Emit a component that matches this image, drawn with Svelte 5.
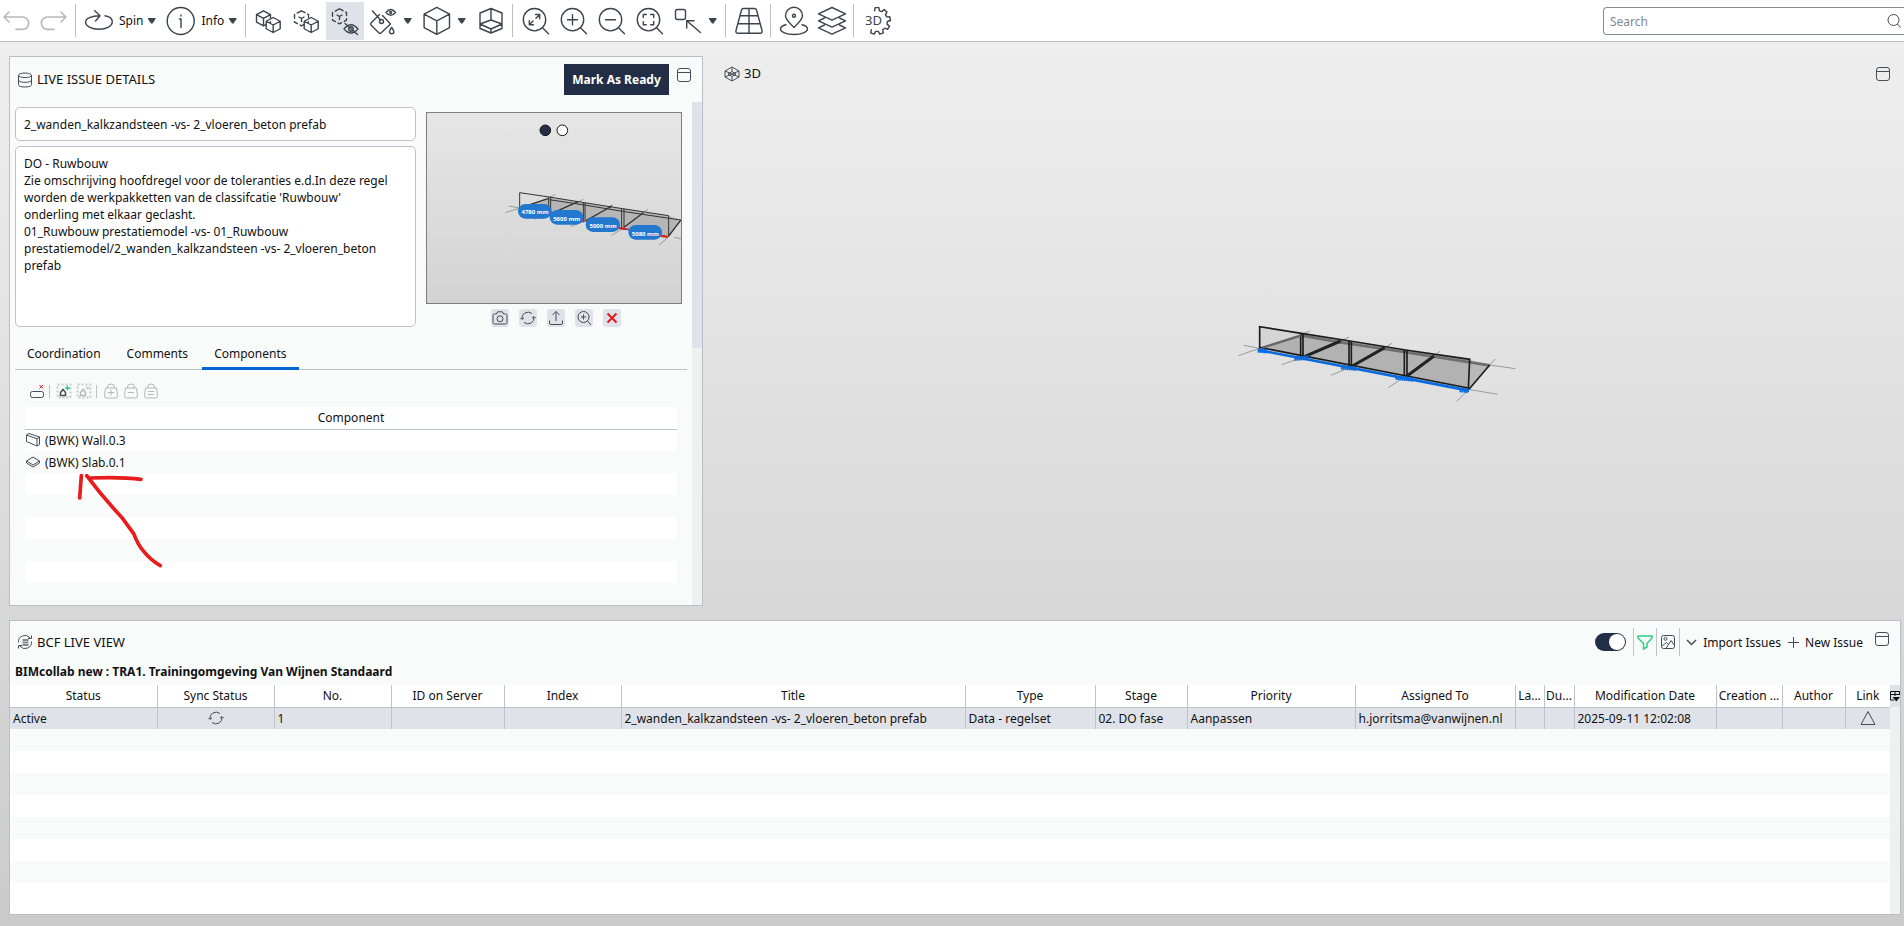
<script lang="ts">
  let activeTab = $state("Components");
  let liveSync = $state(true);
  let title = $state("2_wanden_kalkzandsteen -vs- 2_vloeren_beton prefab");
  let description = $state(
    "DO - Ruwbouw\nZie omschrijving hoofdregel voor de toleranties e.d.In deze regel worden de werkpakketten van de classifcatie 'Ruwbouw' onderling met elkaar geclasht.\n01_Ruwbouw prestatiemodel -vs- 01_Ruwbouw prestatiemodel/2_wanden_kalkzandsteen -vs- 2_vloeren_beton prefab"
  );

  const tabs = ["Coordination", "Comments", "Components"];

  const components = [
    { icon: "wall", name: "(BWK) Wall.0.3" },
    { icon: "slab", name: "(BWK) Slab.0.1" },
  ];

  const columns = [
    { label: "Status", width: 147, value: "Active" },
    { label: "Sync Status", width: 117, icon: "sync" },
    { label: "No.", width: 117, value: "1" },
    { label: "ID on Server", width: 113 },
    { label: "Index", width: 117 },
    { label: "Title", width: 344, value: "2_wanden_kalkzandsteen -vs- 2_vloeren_beton prefab" },
    { label: "Type", width: 130, value: "Data - regelset" },
    { label: "Stage", width: 92, value: "02. DO fase" },
    { label: "Priority", width: 168, value: "Aanpassen" },
    { label: "Assigned To", width: 160, value: "h.jorritsma@vanwijnen.nl" },
    { label: "La...", width: 29 },
    { label: "Du...", width: 30 },
    { label: "Modification Date", width: 142, value: "2025-09-11 12:02:08" },
    { label: "Creation ...", width: 66 },
    { label: "Author", width: 63 },
    { label: "Link", width: 45, icon: "link" },
  ];
  const totalWidth = columns.reduce((sum, c) => sum + c.width, 0);

  // isometric cube around a center point
  function cube(x: number, y: number, w: number, h: number) {
    const q = h / 2;
    return `M${x} ${y - h}L${x + w} ${y - q}V${y + q}L${x} ${y + h}L${x - w} ${y + q}V${y - q}Z`;
  }

  function cubeEdges(x: number, y: number, w: number, h: number) {
    const q = h / 2;
    return `M${x - w} ${y - q}L${x} ${y}L${x + w} ${y - q}M${x} ${y}V${y + h}`;
  }

  // the open gear behind the 3D label
  function gear() {
    const points: string[] = [];
    for (let i = 0; i < 6; i++) {
      const mid = -90 + i * 40;
      for (const [offset, r] of [[-13, 10.5], [-8, 13.5], [8, 13.5], [13, 10.5]]) {
        const a = ((mid + offset) * Math.PI) / 180;
        points.push(`${(19 + r * Math.cos(a)).toFixed(1)} ${(19 + r * Math.sin(a)).toFixed(1)}`);
      }
    }
    return "M" + points.join("L");
  }
</script>

{#snippet tool(name: string, label: string, selected = false)}
  <button class="tool" class:selected aria-label={label}>
    <svg viewBox="0 0 38 38">
      {#if name === "undo"}
        <path class="muted" d="M12 10l-5 5 5 5M7 15H25.500a6.200 6.200 0 0 1 0 12.400H19" />
      {:else if name === "redo"}
        <path class="muted" d="M26 10l5 5-5 5M31 15H12.500a6.200 6.200 0 0 0 0 12.400H19" />
      {:else if name === "spin"}
        <path d="M25 13.800C29.500 14.500 32.300 16.800 32.300 19.800 32.300 24 26.500 27.300 19 27.300S5.600 24 5.600 20.300 11 13.900 20 13.700M14.700 8.700L20 13.700 15.500 19" />
      {:else if name === "info"}
        <circle cx="18.700" cy="19" r="13.500" />
        <path d="M17.500 17H19V25.500M19 13v1" />
      {:else if name === "cubes"}
        <path d={cube(13.5, 16.3, 7, 7.5) + cubeEdges(13.5, 16.3, 7, 7.5)} />
        <path class="cover" d={cube(23.2, 23, 7, 7.5) + cubeEdges(23.2, 23, 7, 7.5)} />
      {:else if name === "isolate"}
        <path stroke-dasharray="4 3" d={cube(13.5, 16.3, 7, 7.5)} />
        <path d="M11 15l2.500 1.500L16 15M13.500 16.500v3" />
        <path class="cover" d={cube(23.2, 23, 7, 7.5) + cubeEdges(23.2, 23, 7, 7.5)} />
      {:else if name === "hide"}
        <path stroke-dasharray="4 3" d={cube(13.5, 14.3, 7, 7.5)} />
        <path d="M11 13l2.500 1.500L16 13M13.500 14.500v3M18 27q7-8.500 14 0q-7 8-14 0M19 21.500l12.500 11" />
        <circle cx="25" cy="27" r="2.200" />
      {:else if name === "paint"}
        <path d="M15.500 12.500L7 21q-1 1 0 2l8 8q1 1 2 0l9.500-9-8-8.500M8.500 9l8 9" />
        <circle cx="17.500" cy="19.500" r="2" />
        <path d="M22 10.500q4.800-6 9.500 0q-4.700 5.500-9.500 0M27.700 25.500q-2.500 3.500-2.200 4.500a2.300 2.300 0 0 0 4.500 0q0-1-2.300-4.500" />
        <circle cx="26.700" cy="10.400" r="1" />
      {:else if name === "cube"}
        <path d={cube(18.8, 18.8, 12.7, 13.5) + cubeEdges(18.8, 18.8, 12.7, 13.5)} />
      {:else if name === "section"}
        <path d="M19 6.500L30 11V26.500L19 31 8 26.500V11ZM19 6.500V18M8 22L19 18 30 22 19 27ZM19 27v4" />
      {:else if name.startsWith("zoom")}
        <circle cx="17.500" cy="17.700" r="11.200" />
        <path d="M25.500 25.700l6 6" />
        {#if name === "zoom-extents"}
          <path d="M12.500 22.500L16 19M19 16.300L22.500 12.800M18.500 12.500H22.700V16.700M12.300 18.700V22.700H16.500" />
        {:else if name === "zoom-in"}
          <path d="M12.500 17.700h10M17.500 12.700v10" />
        {:else if name === "zoom-out"}
          <path d="M12.500 17.700h10" />
        {:else}
          <path d="M12.300 15.500v-3h3M19.700 12.500h3v3M22.700 19.700v3h-3M15.300 22.700h-3v-3" />
        {/if}
      {:else if name === "select"}
        <rect x="6.500" y="7.500" width="10" height="10" rx="2" />
        <path d="M17.700 26V18.700H25M17.700 18.700L31.500 30.500" />
      {:else if name === "grid"}
        <path d="M13.500 6.500H24.500Q26 6.500 26.500 8L32 28.500Q32.500 31.300 30 31.300H8Q5.500 31.300 6 28.500L11.500 8Q12 6.500 13.500 6.500ZM19 6.500V31.300M10.500 13.700H27.500M8 21.700H30" />
      {:else if name === "pin"}
        <path d="M19 25.500C14 20 10.500 17.500 10.500 13.700a8.500 8.500 0 0 1 17 0C27.500 17.500 24 20 19 25.500ZM11 22.700C7.500 23.500 5.500 25.200 5.500 27 5.500 30 11.500 32.500 19 32.500S32.500 30 32.500 27C32.500 25.200 30.500 23.500 27 22.700" />
        <circle cx="19" cy="13.800" r="1.500" />
      {:else if name === "layers"}
        <path d="M19 5.500L32.500 11.800 19 18.200 5.500 11.800ZM11.500 16L5.500 18.800 19 25.200 32.500 18.800 26.500 16M11.500 23L5.500 25.800 19 32.200 32.500 25.800 26.500 23" />
      {:else}
        <path d={gear()} />
        <text x="7" y="23">3D</text>
      {/if}
    </svg>
  </button>
{/snippet}

{#snippet more(label: string)}
  <button class="more" aria-label={label}>
    <svg viewBox="0 0 8 6"><path d="M0 0H7.500V1L4.500 5.500H3L0 1Z" /></svg>
  </button>
{/snippet}

{#snippet icon(name: string)}
  <svg class="icon" viewBox="0 0 16 16">
    {#if name === "database"}
      <ellipse cx="8" cy="3.300" rx="6.500" ry="2.300" />
      <path d="M1.500 3.300v9.200q0 2.500 6.500 2.500t6.500-2.500V3.300M1.500 8q0 2.300 6.500 2.300t6.500-2.300" />
    {:else if name === "window"}
      <rect x="1.500" y="1.500" width="13" height="13" rx="2.500" />
      <path d="M1.500 5.500h13" />
    {:else if name === "live"}
      <path d="M1.500 8.500A6.500 6.500 0 0 1 13 3.800M14.500 7.500A6.500 6.500 0 0 1 3 12.200M14.500 1.500V4.500H11M1.500 14.500V11.500H5" />
      <path class="list" d="M5.500 6h6M5.500 8.500h6M5.500 11h6" />
    {:else if name === "view"}
      <path d="M8 1L15 5V11L8 15 1 11V5ZM1 5L15 11M15 5L1 11M8 1V5.500M8 10.500V15M8 5.500L12 8 8 10.500 4 8Z" />
    {:else if name === "camera"}
      <path d="M2.500 4H4.500L5.500 1.800H10.500L11.500 4H13.500Q15 4 15 5.500V12.500Q15 14 13.500 14H2.500Q1 14 1 12.500V5.500Q1 4 2.500 4Z" />
      <circle cx="8" cy="8.800" r="3" />
    {:else if name === "sync"}
      <path d="M2 9A6 6 0 0 1 4.500 3.200Q8.500.8 12 3.500M14 7A6 6 0 0 1 11.500 12.800Q7.500 15.200 4 12.500M.3 7.800L2 9.500 4 7.800M12 8.200L14 6.500 15.700 8.200" />
    {:else if name === "upload"}
      <path d="M1.500 10.500V13Q1.500 14.500 3 14.500H13Q14.500 14.500 14.500 13V10.500M8 11V1.500M4.500 5L8 1.500 11.500 5" />
    {:else if name === "magnify"}
      <circle cx="7.500" cy="7" r="5.500" />
      <path d="M11.500 11l3.500 4M5 7h5M7.500 4.500v5" />
    {:else if name === "delete"}
      <path class="red" d="M3.500 3.500L12.500 12.500M12.500 3.500L3.500 12.500" />
    {:else if name === "clear"}
      <rect x="1.500" y="8.500" width="13" height="6" rx="2" />
      <path class="red thin" d="M10.500 2L14 5.500M14 2L10.500 5.500" />
    {:else if name === "add-selected" || name === "remove-selected"}
      <g class:muted={name === "remove-selected"}>
        <rect class="dots" x="1.500" y="1.500" width="13" height="13" />
        <path class="bold" d="M4.500 12.500V9.500L7 6.500L9.500 9.500V12.500Z" />
        {#if name === "add-selected"}
          <path class="green" d="M11.500 2.500v5M9 5h5" />
        {:else}
          <path d="M10 3.500l3 3M13 3.500l-3 3" />
        {/if}
      </g>
    {:else if name.startsWith("basket")}
      <g class="muted">
        <path d="M2.500 5H13.500L14.500 13Q14.500 15 12.500 15H3.500Q1.500 15 1.500 13ZM4.500 5V4Q4.500 1 8 1T11.500 4V5" />
        {#if name === "basket-add"}
          <path d="M5 9.500h6M8 6.500v6" />
        {:else if name === "basket-remove"}
          <path d="M5 9.500h6" />
        {:else}
          <path d="M5 8.500h6M5 11.500h6" />
        {/if}
      </g>
    {:else if name === "wall"}
      <path d="M1.500 3L4 1.500 14.500 5V12.500L12 14 1.500 9.500ZM1.500 3L12 6.800V14M12 6.800L14.500 5" />
    {:else if name === "slab"}
      <path d="M8 3L14.500 7V9L8 13 1.500 9V7ZM1.500 7L8 11 14.500 7" />
    {:else if name === "filter"}
      <path class="green" d="M1 2H15V4L10 9.500V13L6.500 15V9.500L1 4Z" />
    {:else if name === "image"}
      <rect x="1.500" y="1.500" width="13" height="13" rx="2" />
      <circle cx="5.500" cy="4.800" r="1.500" />
      <path d="M2 12l4.500-3.500L8 10M6 14.500L11 6.500 14.500 11.500" />
    {:else if name === "chevron"}
      <path class="bold" d="M4 6l4.500 4.500L13 6" />
    {:else if name === "plus"}
      <path d="M8.500 3v11M3 8.500h11" />
    {:else if name === "link"}
      <path d="M8 1.500L15 14.500H1Z" />
    {:else if name === "search"}
      <circle cx="7.500" cy="7" r="5.500" />
      <path d="M11.500 11l3 3.500" />
    {/if}
  </svg>
{/snippet}

<div class="app">
  <header class="toolbar">
    {@render tool("undo", "Undo")}
    {@render tool("redo", "Redo")}
    <span class="divider"></span>
    {@render tool("spin", "Spin mode")}
    <span class="tool-label">Spin</span>
    {@render more("Spin options")}
    {@render tool("info", "Info mode")}
    <span class="tool-label">Info</span>
    {@render more("Info options")}
    <span class="divider"></span>
    {@render tool("cubes", "Show all")}
    {@render tool("isolate", "Isolate")}
    {@render tool("hide", "Hide others", true)}
    {@render tool("paint", "Colors")}
    {@render more("Color options")}
    {@render tool("cube", "Views")}
    {@render more("View options")}
    {@render tool("section", "Section")}
    <span class="divider"></span>
    {@render tool("zoom-extents", "Zoom extents")}
    {@render tool("zoom-in", "Zoom in")}
    {@render tool("zoom-out", "Zoom out")}
    {@render tool("zoom-window", "Zoom window")}
    {@render tool("select", "Select")}
    {@render more("Select options")}
    <span class="divider"></span>
    {@render tool("grid", "Grid")}
    <span class="divider"></span>
    {@render tool("pin", "Location")}
    {@render tool("layers", "Layers")}
    <span class="divider"></span>
    {@render tool("settings", "3D settings")}
    <div class="search">
      <input type="text" placeholder="Search" aria-label="Search" />
      {@render icon("search")}
    </div>
  </header>

  <main>
    <section class="panel details">
      <div class="panel-header">
        {@render icon("database")}
        <h2>LIVE ISSUE DETAILS</h2>
        <button class="ready">Mark As Ready</button>
        <button class="plain window" aria-label="Maximize details">{@render icon("window")}</button>
      </div>
      <div class="details-body">
        <div class="details-content">
          <div class="issue">
            <div class="fields">
              <input type="text" bind:value={title} aria-label="Title" />
              <textarea bind:value={description} aria-label="Description" spellcheck="false"></textarea>
            </div>
            <div class="preview">
              <svg class="snapshot" viewBox="51 189 762 570">
                <defs>
                  <linearGradient id="sky" x1="0" y1="0" x2="0" y2="1">
                    <stop offset="0" stop-color="#e6e6e6" />
                    <stop offset="1" stop-color="#d3d3d3" />
                  </linearGradient>
                </defs>
                <rect x="51" y="189" width="762" height="570" fill="url(#sky)" />
                <path class="floor" d="M330 474L418 441 523 458 638 476 776 497 812 510 776 560 638 535 523 514 418 492Z" />
                <path class="axis" d="M286 488L330 474M296 468l34 6M372 508l46-16M418 441l18-7M482 529l41-15M500 458l20-10M604 557l34-22M590 474l18-10M747 586l29-26M696 490l18-12M793 562l20 4" />
                <path class="edge" d="M329 474V428L418 441 523 458 638 476 776 497V558M416 441V490M422 441V490M520 458V512M525 458V512M635 476V533M642 476V533M418 449L523 465 638 484 812 510" />
                <path class="edge beam" d="M335 472L414 446M426 490L504 455M528 512L606 468M642 532L700 488M776 558L813 510" />
                <path class="red" d="M330 477L776 560" stroke-width="3" />
                <path class="cut" d="M330 479L523 516M560 524L755 556" />
                <path class="red" d="M627 534l20 4M752 558l22 3" stroke-width="6" />
                <rect class="tag" x="324" y="462" width="101" height="44" rx="22" />
                <rect class="tag" x="419" y="480" width="101" height="44" rx="22" />
                <rect class="tag" x="527" y="502" width="103" height="44" rx="22" />
                <rect class="tag" x="655" y="525" width="101" height="44" rx="22" />
                <text x="375" y="493">4780 mm</text>
                <text x="470" y="512">5600 mm</text>
                <text x="579" y="533">5000 mm</text>
                <text x="706" y="557">5080 mm</text>
                <circle cx="406" cy="241" r="16" fill="#222e45" stroke="#111" stroke-width="3" />
                <circle cx="457" cy="241" r="16" fill="#fff" stroke="#111" stroke-width="3" />
              </svg>
              <div class="preview-actions">
                <button aria-label="Take snapshot">{@render icon("camera")}</button>
                <button aria-label="Refresh snapshot">{@render icon("sync")}</button>
                <button aria-label="Upload snapshot">{@render icon("upload")}</button>
                <button aria-label="Enlarge snapshot">{@render icon("magnify")}</button>
                <button aria-label="Delete snapshot">{@render icon("delete")}</button>
              </div>
            </div>
          </div>

          <nav class="tabs">
            {#each tabs as tab}
              <button class:active={tab === activeTab} onclick={() => (activeTab = tab)}>{tab}</button>
            {/each}
          </nav>

          <div class="component-tools">
            <button class="plain" aria-label="Clear components">{@render icon("clear")}</button>
            <span></span>
            <button class="plain" aria-label="Add selected">{@render icon("add-selected")}</button>
            <button class="plain" aria-label="Remove selected">{@render icon("remove-selected")}</button>
            <span></span>
            <button class="plain" aria-label="Add to basket">{@render icon("basket-add")}</button>
            <button class="plain" aria-label="Remove from basket">{@render icon("basket-remove")}</button>
            <button class="plain" aria-label="Set basket">{@render icon("basket-set")}</button>
          </div>

          <div class="component-list">
            <table>
              <thead>
                <tr><th>Component</th></tr>
              </thead>
              <tbody>
                {#each components as component}
                  <tr>
                    <td><div class="component">{@render icon(component.icon)}{component.name}</div></td>
                  </tr>
                {/each}
                {#each Array(5) as _}
                  <tr><td></td></tr>
                {/each}
              </tbody>
            </table>
            <svg class="arrow" viewBox="0 0 300 290">
              <path d="M28 8L23 75M52 15Q150 11 207 19M44 8Q90 70 150 134L185 182Q200 220 215 235 235 260 265 278" />
            </svg>
          </div>
        </div>
        <div class="scrollbar"><div></div></div>
      </div>
    </section>

    <section class="viewer">
      <div class="viewer-header">
        {@render icon("view")}
        <h2>3D</h2>
        <button class="plain" aria-label="Maximize 3D view">{@render icon("window")}</button>
      </div>
      <svg class="model" viewBox="0 0 960 300">
        <path class="wall" d="M122 50L247 70V142L122 115Z" />
        <path class="floor" d="M122 115L245 73 393 94 560 120 752 150 812 165 748 240 558 200 393 172 248 143Z" />
        <path class="wall" d="M247 70L393 93V172L248 143ZM393 93L560 120V200L393 172ZM560 120L752 148 748 238 558 200Z" />
        <path class="axis" d="M74 106L122 115L58 137M188 164L248 143M245 73L274 63M336 196L393 172M365 93L390 81M508 233L558 200M497 113L519 100M712 275L748 240M645 138L664 123M812 165L829 147M812 165L889 176M748 238L836 253" />
        <path class="back" d="M245 76L365 97 497 117 645 140 812 166" />
        <path class="edge" d="M122 115V50L247 70 393 93 560 120 752 148 748 238M245 70V140M252 70V140M390 93V170M397 93V170M556 120V200M564 120V198M122 112L748 234" />
        <path class="soft" d="M130 113L245 77" />
        <path class="beam" d="M258 139L365 93M400 168L497 113M564 198L645 138" />
        <path class="edge" d="M750 238L812 165" />
        <path class="cut" d="M118 120L750 242" />
        <path class="nodes" d="M116 121l28 3M226 146l44-3M366 172l46 4M530 203l54 6M722 240l26 3" />
      </svg>
    </section>

    <section class="panel live">
      <div class="live-header">
        {@render icon("live")}
        <h2>BCF LIVE VIEW</h2>
        <input class="toggle" type="checkbox" bind:checked={liveSync} aria-label="Live sync" />
        <span class="rule"></span>
        <button class="plain" aria-label="Filter">{@render icon("filter")}</button>
        <span class="rule"></span>
        <button class="plain" aria-label="Snapshots">{@render icon("image")}</button>
        <span class="rule"></span>
        <button class="plain action">{@render icon("chevron")}Import Issues</button>
        <button class="plain action">{@render icon("plus")}New Issue</button>
        <button class="plain window" aria-label="Maximize live view">{@render icon("window")}</button>
      </div>
      <h3>BIMcollab new : TRA1. Trainingomgeving Van Wijnen Standaard</h3>
      <div class="grid-body">
        <div class="grid-rows">
          <table class="issues">
            <colgroup>
              {#each columns as column}
                <col style="width: {(column.width / totalWidth) * 100}%" />
              {/each}
            </colgroup>
            <thead>
              <tr>
                {#each columns as column}
                  <th>{column.label}</th>
                {/each}
              </tr>
            </thead>
            <tbody>
              <tr class="current">
                {#each columns as column}
                  <td class:centered={column.icon}>
                    {#if column.icon}{@render icon(column.icon)}{:else}{column.value ?? ""}{/if}
                  </td>
                {/each}
              </tr>
              {#each Array(7) as _}
                <tr><td colspan={columns.length}></td></tr>
              {/each}
            </tbody>
          </table>
        </div>
        <div class="gutter">
          <button class="plain" aria-label="Choose columns">
            <svg viewBox="0 0 10 12">
              <path d="M.5 10V1.500H9.500V5M.5 4.500H9.500M5 1.500V6M.5 10H4" fill="none" stroke="#111" />
              <path d="M2.500 7H10L6.300 11.500Z" fill="#111" />
            </svg>
          </button>
        </div>
      </div>
    </section>
  </main>
</div>

<style>
  :global(body) {
    background: #cbcbcb;
  }

  .app {
    background: linear-gradient(#f0f0f0, #cbcbcb);
    color: #111;
    display: flex;
    flex-direction: column;
    font: 12px/17px "Noto Sans", sans-serif;
    min-height: 100vh;
    overflow: hidden;
  }

  button,
  input,
  textarea {
    box-sizing: border-box;
    color: inherit;
    font: inherit;
    margin: 0;
  }

  button {
    border: 0;
    padding: 0;
  }

  svg {
    display: block;
    fill: none;
  }

  h2,
  h3 {
    margin: 0;
  }

  h2 {
    font-size: 13px;
    font-weight: 400;
  }

  .icon {
    flex: none;
    height: 16px;
    stroke: #454d57;
    width: 16px;
  }

  .icon .muted {
    stroke: #b5b7b9;
  }

  .icon .bold {
    stroke-width: 1.5;
  }

  .icon .red {
    stroke: #e01b1b;
    stroke-width: 2;
  }

  .icon .thin {
    stroke-width: 1;
  }

  .icon .green {
    stroke: #2fce84;
    stroke-width: 1.5;
  }

  .icon .list {
    stroke: #888;
    stroke-width: 2;
  }

  .icon .dots {
    stroke: #c8cacc;
    stroke-dasharray: 2 2;
    stroke-width: 2;
  }

  .plain {
    background: none;
  }

  /* toolbar */

  .toolbar {
    align-items: center;
    background: #fff;
    border-bottom: 1px solid #b9bdc6;
    display: flex;
    height: 41px;
  }

  .tool:first-child {
    margin-left: -3px;
  }

  .tool {
    background: none;
    flex: none;
    height: 38px;
    width: 38px;
  }

  .tool.selected {
    background: #dfe2e8;
  }

  .tool path,
  .tool circle,
  .tool rect {
    stroke: #3c444d;
    stroke-linecap: round;
    stroke-linejoin: round;
    stroke-width: 1.4;
  }

  .tool .muted {
    stroke: #b8b8b8;
    stroke-width: 1.6;
  }

  .tool .cover {
    fill: #fff;
  }

  .tool text {
    fill: #3c444d;
    font-size: 13px;
  }

  .tool-label {
    padding: 0 3px 0 1px;
  }

  .more {
    background: none;
    height: 38px;
    padding-left: 2px;
    width: 16px;
  }

  .more svg {
    fill: #3c444d;
    height: 6px;
    width: 8px;
  }

  .divider {
    background: #b9bdc6;
    height: 33px;
    margin: 0 4px 0 2px;
    width: 1px;
  }

  .search {
    align-items: center;
    border: 1px solid #868b93;
    border-radius: 4px 0 0 4px;
    border-right: 0;
    display: flex;
    height: 26px;
    margin-left: auto;
    padding-right: 2px;
    width: 298px;
  }

  .search input {
    background: none;
    border: 0;
    flex: 1;
    outline: 0;
    padding: 2px 6px 0;
  }

  .search input::placeholder {
    color: #7f8890;
  }

  /* workspace */

  main {
    display: grid;
    flex: 1;
    gap: 14px 0;
    grid-template-columns: 694fr 1198fr;
    grid-template-rows: 550fr 295fr;
    padding: 14px 3px 11px 9px;
  }

  .panel {
    background: #f9fbfa;
    border: 1px solid #b9bfc9;
    display: flex;
    flex-direction: column;
    min-width: 0;
  }

  .panel-header {
    align-items: center;
    display: flex;
    height: 45px;
    padding: 0 10px 0 7px;
  }

  .panel-header h2,
  .live-header h2 {
    flex: 1;
    padding-left: 4px;
  }

  .ready {
    background: #222e45;
    color: #fff;
    font-weight: 700;
    height: 31px;
    width: 105px;
  }

  .window {
    align-self: flex-start;
    margin: 10px 0 0 7px;
  }

  .details-body {
    display: flex;
    flex: 1;
  }

  .details-content {
    flex: 1;
    min-width: 0;
    padding: 5px 5px 0;
  }

  .scrollbar {
    background: #eff1f1;
    width: 10px;
  }

  .scrollbar div {
    background: #dfe2e8;
    height: 49%;
  }

  .issue {
    display: grid;
    gap: 10px;
    grid-template-columns: 1fr 256px;
    padding-right: 5px;
  }

  .fields {
    display: flex;
    flex-direction: column;
    gap: 5px;
  }

  .fields input,
  .fields textarea {
    background: #fff;
    border: 1px solid #bcc1cb;
    border-radius: 5px;
    padding: 0 8px;
    width: 100%;
  }

  .fields input {
    height: 34px;
  }

  .fields textarea {
    height: 181px;
    padding: 8px 20px 8px 8px;
    resize: none;
  }

  .preview {
    padding-top: 5px;
  }

  .snapshot {
    border: 1px solid #7d7d7d;
  }

  .snapshot .floor,
  .model .floor {
    fill: rgba(125, 125, 125, 0.4);
  }

  .snapshot .edge {
    stroke: #333;
    stroke-width: 3;
  }

  .snapshot .beam {
    stroke-width: 4;
  }

  .snapshot .axis,
  .model .axis {
    stroke: #777;
    stroke-width: 2;
  }

  .snapshot .red {
    stroke: #e81c1c;
  }

  .snapshot .cut {
    stroke: #1b4fa8;
    stroke-width: 3;
  }

  .snapshot .tag {
    fill: #2277cf;
  }

  .snapshot text {
    fill: #fff;
    font-size: 18px;
    font-weight: 700;
    text-anchor: middle;
  }

  .preview-actions {
    display: flex;
    gap: 10px;
    justify-content: center;
    padding: 5px 0 0 4px;
  }

  .preview-actions button {
    background: #dfe2e8;
    border-radius: 3px;
    height: 18px;
    padding: 1px;
    width: 18px;
  }

  .tabs {
    border-bottom: 1px solid #bcc1cb;
    display: flex;
    gap: 2px;
    margin-top: 9px;
  }

  .tabs button {
    background: none;
    border-bottom: 3px solid transparent;
    height: 34px;
    margin-bottom: -1px;
    padding: 4px 12px 0;
  }

  .tabs .active {
    border-color: #0064d2;
  }

  .component-tools {
    align-items: center;
    display: flex;
    gap: 4px;
    padding: 13px 14px 8px;
  }

  .component-tools span {
    background: #bcc1cb;
    height: 13px;
    margin-right: 2px;
    width: 1px;
  }

  table {
    border-collapse: collapse;
    table-layout: fixed;
    width: 100%;
  }

  th,
  td {
    box-sizing: border-box;
    height: 22px;
    overflow: hidden;
    padding: 0;
    white-space: nowrap;
  }

  th {
    background: #fff;
    border-bottom: 1px solid #bfc3cb;
    font-weight: 400;
  }

  .component-list {
    margin: 0 10px;
    position: relative;
  }

  .component-list tbody tr:nth-child(odd) {
    background: #fff;
  }

  .component {
    display: flex;
    gap: 4px;
  }

  /* hand-drawn markup on top of the list */
  .arrow {
    left: 47px;
    position: absolute;
    top: 66px;
    width: 100px;
  }

  .arrow path {
    stroke: #e81c1c;
    stroke-linecap: round;
    stroke-linejoin: round;
    stroke-width: 11;
  }

  /* 3D view */

  .viewer {
    position: relative;
  }

  .viewer-header {
    align-items: center;
    display: flex;
    gap: 4px;
    padding: 9px 10px 0 21px;
  }

  .viewer-header h2 {
    flex: 1;
  }

  .model {
    left: 43.1%;
    position: absolute;
    top: 46.2%;
    width: 320px;
  }

  .model .wall {
    fill: rgba(140, 140, 140, 0.16);
  }

  .model .edge {
    stroke: #1c1c1c;
    stroke-width: 5;
  }

  .model .back {
    stroke: #6e6e6e;
    stroke-width: 8;
  }

  .model .soft {
    stroke: #666;
    stroke-width: 7;
  }

  .model .beam {
    stroke: #222;
    stroke-width: 9;
  }

  .model .cut {
    stroke: #0a6be0;
    stroke-width: 8;
  }

  .model .nodes {
    stroke: #0a6be0;
    stroke-dasharray: 5 1;
    stroke-width: 13;
  }

  /* live view */

  .live {
    grid-column: 1 / -1;
  }

  .live-header {
    align-items: center;
    display: flex;
    height: 42px;
    padding: 0 10px 0 7px;
  }

  .rule {
    background: #bfc3cb;
    height: 28px;
    margin: 0 3px;
    width: 1px;
  }

  .toggle {
    appearance: none;
    background: #222e45;
    border-radius: 9px;
    height: 18px;
    margin-right: 4px;
    padding: 1px;
    width: 31px;
  }

  .toggle::before {
    background: #fff;
    border-radius: 8px;
    content: "";
    display: block;
    height: 16px;
    width: 16px;
  }

  .toggle:checked::before {
    margin-left: auto;
  }

  .action {
    align-items: center;
    display: flex;
    gap: 4px;
    margin-right: 4px;
  }

  .live-header .window {
    margin-top: 10px;
  }

  h3 {
    font-size: 12px;
    font-weight: 700;
    height: 22px;
    padding-left: 5px;
  }

  .grid-body {
    background: #fff;
    display: flex;
    flex: 1;
  }

  .grid-rows {
    flex: 1;
    min-width: 0;
  }

  .issues th + th,
  .issues .current td + td {
    border-left: 1px solid #bfc3cb;
  }

  .issues td {
    padding-left: 3px;
  }

  .issues tbody tr:nth-child(even) {
    background: #f9fbfa;
  }

  .issues .current {
    background: #dfe2e8;
  }

  .issues .centered {
    padding-left: 0;
  }

  .issues .centered .icon {
    margin: 0 auto;
  }

  .gutter {
    background: #eff1f1;
    width: 10px;
  }

  .gutter button {
    background: #dfe2e8;
    display: block;
    height: 22px;
    width: 10px;
  }
</style>
